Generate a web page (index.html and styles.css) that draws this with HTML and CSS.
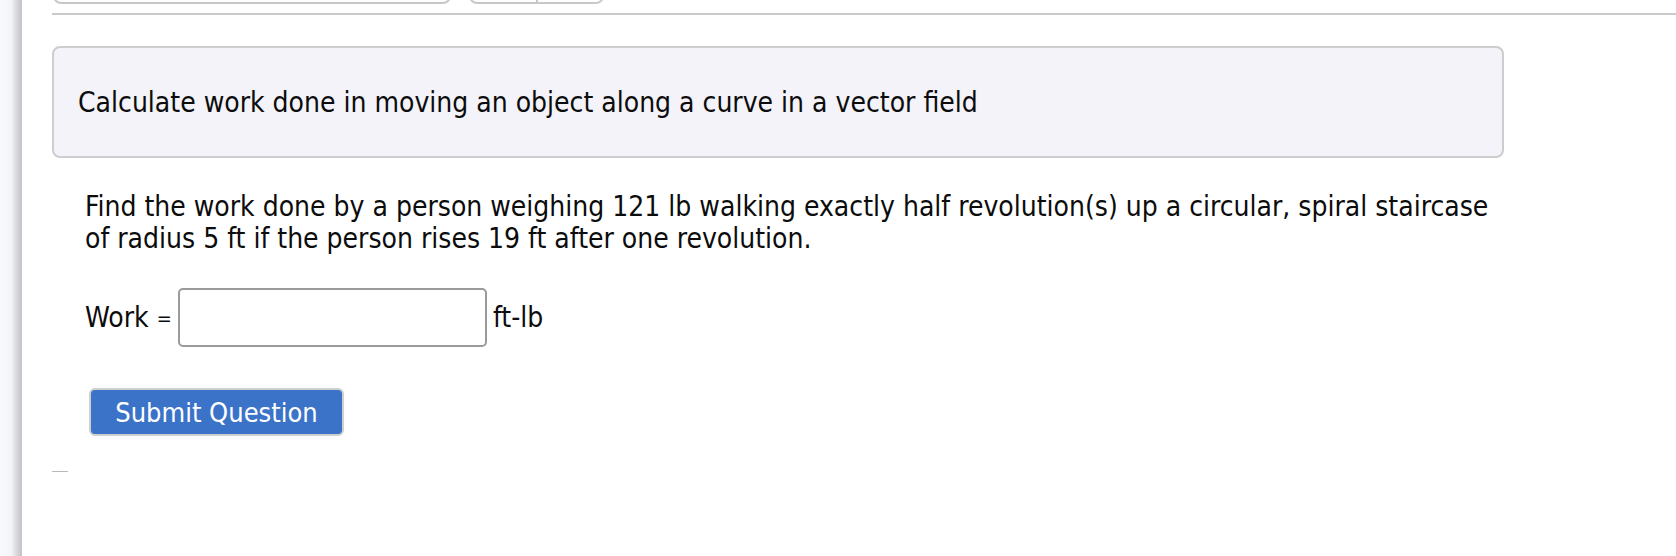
FILE: index.html
```html
<!DOCTYPE html>
<html>
<head>
<meta charset="utf-8">
<link rel="stylesheet" href="styles.css">
</head>
<body>
<div class="page">
  <div class="sidebar"></div>
  <div class="main">
    <div class="topbar">
      <div class="topbox wide"></div>
      <div class="topbox split"><span></span><span></span></div>
    </div>
    <div class="rule"></div>
    <div class="titlebox">Calculate work done in moving an object along a curve in a vector field</div>
    <div class="question">
      <p class="prompt">Find the work done by a person weighing 121 lb walking exactly half revolution(s) up a circular, spiral staircase of radius 5 ft if the person rises 19 ft after one revolution.</p>
      <div class="answer-row">
        <span class="label">Work <span class="eq">=</span></span>
        <input class="answer" type="text">
        <span class="unit">ft-lb</span>
      </div>
      <button class="submit">Submit Question</button>
    </div>
    <div class="stub"></div>
  </div>
</div>
</body>
</html>
```
FILE: styles.css
```css
html, body {
  margin: 0;
  padding: 0;
  background: #ffffff;
  overflow: hidden;
}
body {
  font-family: "DejaVu Sans Condensed", "DejaVu Sans", sans-serif;
  color: #0c0c0c;
}
.page {
  display: flex;
  width: 1676px;
  height: 556px;
}
.sidebar {
  flex: 0 0 22px;
  background: linear-gradient(to right, #f8f9fd 0, #f4f5f9 11px, #dcdce0 16px, #c6c6ca 21px, #c6c6ca 22px);
}
.main {
  flex: 1;
  padding-left: 30px;
  display: flex;
  flex-direction: column;
}
.topbar {
  display: flex;
  gap: 18px;
  margin-top: -26px;
  height: 30px;
}
.topbox {
  box-sizing: border-box;
  height: 30px;
  border: 2px solid #c8c8c8;
  border-radius: 8px;
  background: #fff;
}
.topbox.wide {
  width: 398px;
  margin-left: 1px;
}
.topbox.split {
  width: 135px;
  display: flex;
}
.topbox.split span {
  flex: 1;
}
.topbox.split span:first-child {
  border-right: 2px solid #c8c8c8;
}
.rule {
  height: 2px;
  background: #cacaca;
  margin-top: 9px;
}
.titlebox {
  box-sizing: border-box;
  margin-top: 31px;
  width: 1452px;
  height: 112px;
  border: 2px solid #cdcdcd;
  border-radius: 8px;
  background: #f3f3f9;
  padding-left: 24px;
  display: flex;
  align-items: center;
  font-size: 28px;
}
.question {
  padding-left: 33px;
}
.prompt {
  margin: 33px 0 0 0;
  font-size: 28px;
  line-height: 32px;
  width: 1410px;
}
.answer-row {
  display: flex;
  align-items: center;
  margin-top: 33px;
  font-size: 28px;
}
.label {
  width: 93px;
  flex: 0 0 93px;
}
.eq {
  font-size: 20px;
  vertical-align: 2px;
}
.answer {
  box-sizing: border-box;
  width: 309px;
  height: 59px;
  border: 2px solid #9a9a9a;
  border-radius: 5px;
  background: #fff;
  margin: 0 6px 0 0;
  padding: 0;
}
.submit {
  margin-top: 41px;
  margin-left: 4px;
  box-sizing: border-box;
  width: 255px;
  height: 48px;
  background: #3b73c9;
  color: #fff;
  border: 2px solid #cfcfcf;
  border-radius: 6px;
  font-family: "DejaVu Sans Condensed", "DejaVu Sans", sans-serif;
  font-size: 27px;
  padding: 0;
  display: block;
}
.stub {
  margin-top: 35px;
  width: 16px;
  height: 1px;
  background: #b8b8b8;
}
```
